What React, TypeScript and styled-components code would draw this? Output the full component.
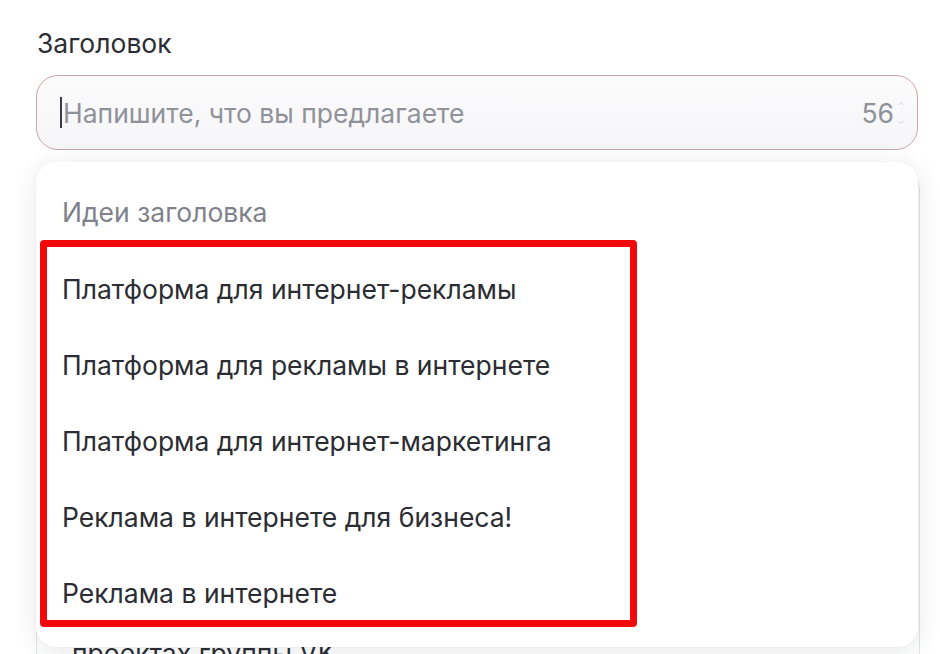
import React from 'react';
import styled, { createGlobalStyle } from 'styled-components';

const ideas = [
  'Платформа для интернет-рекламы',
  'Платформа для рекламы в интернете',
  'Платформа для интернет-маркетинга',
  'Реклама в интернете для бизнеса!',
  'Реклама в интернете',
];

const App = () => {
  return (
    <Page>
      <GlobalStyle />
      <Field>
        <Label>Заголовок</Label>
        <InputWrap>
          <InputBox>
            <Caret />
            <Placeholder>Напишите, что вы предлагаете</Placeholder>
            <Counter>56</Counter>
            <Spinner>
              <svg width="8" height="26" viewBox="0 0 8 26">
                <path d="M1.5 5 L4 2.5 L6.5 5" fill="none" stroke="#d3d4d8" strokeWidth="1" />
                <path d="M1.5 21 L4 23.5 L6.5 21" fill="none" stroke="#d3d4d8" strokeWidth="1" />
              </svg>
            </Spinner>
          </InputBox>
          <Dropdown>
            <DropdownTitle>Идеи заголовка</DropdownTitle>
            <Highlight>
              {ideas.map((idea) => (
                <Idea key={idea}>{idea}</Idea>
              ))}
            </Highlight>
          </Dropdown>
        </InputWrap>
      </Field>
      <TextBox>
        <TextLine>проектах группы VK.</TextLine>
      </TextBox>
    </Page>
  );
};

export default App;

const GlobalStyle = createGlobalStyle`
  html, body {
    margin: 0;
    padding: 0;
    background: #fff;
    overflow: hidden;
  }
  body {
    font-family: Inter, "Noto Sans", sans-serif;
    color: #2b2d33;
  }
`;

const Page = styled.div`
  width: 940px;
  height: 654px;
  box-sizing: border-box;
  padding: 26px 22px 0 36px;
  overflow: hidden;
  background: #fff;
`;

const Field = styled.div`
  display: flex;
  flex-direction: column;
  gap: 15px;
`;

const Label = styled.div`
  font-size: 26.5px;
  line-height: 34px;
  color: #2b2d33;
  padding-left: 1px;
`;

const InputWrap = styled.div`
  position: relative;
  z-index: 2;
`;

const InputBox = styled.div`
  height: 75px;
  box-sizing: border-box;
  border: 1.5px solid #c9a5a6;
  border-radius: 22px;
  background: linear-gradient(#fbfbfc, #f6f6f8);
  display: flex;
  align-items: center;
  padding: 0 12px 0 23px;
`;

const Caret = styled.div`
  width: 2px;
  height: 31px;
  background: #3a3c42;
  margin-right: 1px;
`;

const Placeholder = styled.div`
  flex: 1;
  font-size: 26.5px;
  color: #8f9299;
`;

const Counter = styled.div`
  font-size: 26.5px;
  color: #8e9197;
  margin-right: 3px;
`;

const Spinner = styled.div`
  display: flex;
  align-items: center;
`;

const Dropdown = styled.div`
  position: absolute;
  top: calc(100% + 12px);
  left: 0;
  right: 0;
  height: 485px;
  box-sizing: border-box;
  background: #fff;
  border-radius: 20px;
  box-shadow: 0 4px 24px rgba(30, 35, 50, 0.11), 0 0 2px rgba(30, 35, 50, 0.06);
  padding: 33px 0 0 4px;
`;

const DropdownTitle = styled.div`
  font-size: 26.5px;
  line-height: 34px;
  color: #7f828a;
  padding-left: 22px;
  margin-bottom: 11px;
`;

const Highlight = styled.div`
  width: 597px;
  height: 387px;
  box-sizing: border-box;
  border: 7px solid #f20a0a;
  border-radius: 4px;
  padding: 4px 0 0 15px;
`;

const Idea = styled.div`
  height: 76px;
  display: flex;
  align-items: center;
  font-size: 26.5px;
  color: #2b2d33;
  white-space: nowrap;
`;

const TextBox = styled.div`
  box-sizing: border-box;
  height: 560px;
  margin: 20px -2px 0 0;
  border: 1px solid #e3e4e7;
  border-radius: 20px;
  background: #fff;
  padding: 465px 0 0 35px;
`;

const TextLine = styled.div`
  font-size: 26.5px;
  line-height: 34px;
  color: #2b2d33;
`;
